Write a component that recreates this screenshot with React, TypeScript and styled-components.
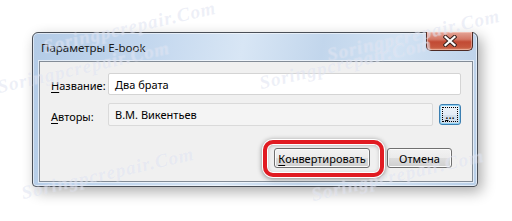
import React from "react";
import styled, { createGlobalStyle } from "styled-components";

const Global = createGlobalStyle`
  html, body { margin: 0; padding: 0; background: #ffffff; }
  body { width: 512px; height: 221px; overflow: hidden; font-family: "Noto Sans", "Open Sans", sans-serif; }
`;

const Page = styled.div`
  position: relative;
  width: 512px;
  height: 221px;
  padding: 32px 0 0 32px;
  box-sizing: border-box;
  overflow: hidden;
`;

const Win = styled.div`
  position: relative;
  width: 446px;
  height: 155px;
  box-sizing: border-box;
  display: flex;
  flex-direction: column;
  border: 1px solid #4a4f57;
  border-radius: 6px 6px 4px 4px;
  background: linear-gradient(100deg, #b3cbe6 0%, #c3d7ee 25%, #d8e6f5 45%, #c2d6ec 62%, #d2e2f3 78%, #b9cfe8 100%);
  box-shadow: 4px 5px 14px rgba(0, 0, 0, 0.32), inset 0 0 0 1px rgba(255, 255, 255, 0.55);
`;

const TitleBar = styled.div`
  height: 28px;
  display: flex;
  align-items: center;
  padding-left: 8px;
  font-size: 11.5px;
  color: #1a1a1a;
`;

const CloseBtn = styled.div`
  position: absolute;
  top: -1px;
  right: 4px;
  width: 47px;
  height: 19px;
  box-sizing: border-box;
  border: 1px solid #4e2a24;
  border-top: none;
  border-radius: 0 0 5px 5px;
  background: linear-gradient(180deg, #e4a597 0%, #d47866 40%, #c24a34 55%, #c6583f 85%, #d98a6e 100%);
  box-shadow: inset 0 0 0 1px rgba(255, 220, 210, 0.45);
  display: flex;
  align-items: center;
  justify-content: center;
`;

const Client = styled.div`
  flex: 1;
  margin: 0 4px 4px 6px;
  border: 1px solid #838c97;
  background: #f0f0f0;
  padding: 11px 11px 13px 11px;
  display: flex;
  flex-direction: column;
  box-shadow: 0 0 0 1px rgba(255, 255, 255, 0.6);
`;

const Form = styled.div`
  display: grid;
  grid-template-columns: 57px 1fr auto;
  grid-template-rows: 22px 23px;
  row-gap: 8px;
  align-items: center;
`;

const Label = styled.div`
  font-size: 11px;
  color: #000;
  padding-top: 3px;
  white-space: nowrap;
  u { text-decoration: underline; text-underline-offset: 2px; }
`;

const Input = styled.div<{ $readonly?: boolean; $span?: boolean }>`
  grid-column: ${(p) => (p.$span ? "2 / 4" : "2 / 3")};
  height: 100%;
  box-sizing: border-box;
  border: 1px solid ${(p) => (p.$readonly ? "#dadada" : "#d4d4d4")};
  border-radius: 2px;
  background: ${(p) => (p.$readonly ? "#f4f4f4" : "#ffffff")};
  font-size: 11px;
  color: #000;
  padding: 0 6px;
  display: flex;
  align-items: center;
  white-space: nowrap;
`;

const DotsBtn = styled.div`
  margin-left: 6px;
  width: 22px;
  height: 21px;
  box-sizing: border-box;
  border: 1px solid #3c7fb1;
  border-radius: 3px;
  background: linear-gradient(180deg, #eef4fa 0%, #e3ecf6 50%, #d5e2ef 51%, #cfdcea 100%);
  box-shadow: inset 0 0 0 1px #8ed3f5;
  position: relative;
  display: flex;
  align-items: flex-end;
  justify-content: center;
  font-size: 12px;
  line-height: 12px;
  padding-bottom: 3px;
  &::after {
    content: "";
    position: absolute;
    inset: 2px;
    border: 1px dotted #000;
  }
  u { text-decoration: underline; text-underline-offset: 1px; }
`;

const Buttons = styled.div`
  margin-top: 22px;
  display: flex;
  justify-content: flex-end;
  gap: 17px;
  padding-right: 9px;
`;

const HighlightWrap = styled.div`
  position: relative;
  display: flex;
  &::after {
    content: "";
    position: absolute;
    top: -8px;
    bottom: -9px;
    left: -11px;
    right: -14px;
    border: 4px solid #e11b22;
    border-radius: 10px;
    box-shadow: 0 0 0 1px #ffffff, 0 1px 5px 1px rgba(0, 0, 0, 0.45), inset 0 0 0 1px #ffffff, inset 0 1px 4px rgba(0, 0, 0, 0.3);
    pointer-events: none;
  }
`;

const Btn = styled.div<{ $w: number }>`
  width: ${(p) => p.$w}px;
  height: 20px;
  box-sizing: border-box;
  border: 1px solid #707070;
  border-radius: 3px;
  background: linear-gradient(180deg, #f2f2f2 0%, #ebebeb 50%, #dddddd 51%, #cfcfcf 100%);
  box-shadow: inset 0 0 0 1px #fcfcfc;
  font-size: 11px;
  color: #000;
  display: flex;
  align-items: center;
  justify-content: center;
  white-space: nowrap;
  u { text-decoration: underline; text-underline-offset: 2px; }
`;

const Watermark = styled.div<{ $x: number; $y: number }>`
  position: absolute;
  left: ${(p) => p.$x}px;
  top: ${(p) => p.$y}px;
  font-family: "Liberation Serif", serif;
  font-style: italic;
  font-weight: bold;
  font-size: 19px;
  letter-spacing: 1px;
  color: rgba(175, 186, 222, 0.22);
  text-shadow: 0 0 1px rgba(255, 255, 255, 0.5);
  transform: rotate(-13deg);
  transform-origin: left bottom;
  white-space: nowrap;
  pointer-events: none;
`;

const marks: [number, number][] = [
  [46, 36],
  [330, 44],
  [0, 76],
  [262, 72],
  [24, 182],
  [314, 184],
];

export default function App() {
  return (
    <>
      <Global />
      <Page>
        <Win>
          <TitleBar>Параметры E-book</TitleBar>
          <CloseBtn>
            <svg width="14" height="12" viewBox="0 0 14 12">
              <path d="M2.5 2 L11.5 10 M11.5 2 L2.5 10" stroke="#3a2420" strokeWidth="4.2" strokeLinecap="square" />
              <path d="M2.5 2 L11.5 10 M11.5 2 L2.5 10" stroke="#ffffff" strokeWidth="2.2" strokeLinecap="square" />
            </svg>
          </CloseBtn>
          <Client>
            <Form>
              <Label>
                <u>Н</u>азвание:
              </Label>
              <Input $span>Два брата</Input>
              <Label>
                <u>А</u>вторы:
              </Label>
              <Input $readonly>В.М. Викентьев</Input>
              <DotsBtn>
                <u>.</u>..
              </DotsBtn>
            </Form>
            <Buttons>
              <HighlightWrap>
                <Btn $w={96}>
                  <u>К</u>онвертировать
                </Btn>
              </HighlightWrap>
              <Btn $w={65}>Отмена</Btn>
            </Buttons>
          </Client>
        </Win>
        {marks.map(([x, y], i) => (
          <Watermark key={i} $x={x} $y={y}>
            Soringpcrepair.Com
          </Watermark>
        ))}
      </Page>
    </>
  );
}
